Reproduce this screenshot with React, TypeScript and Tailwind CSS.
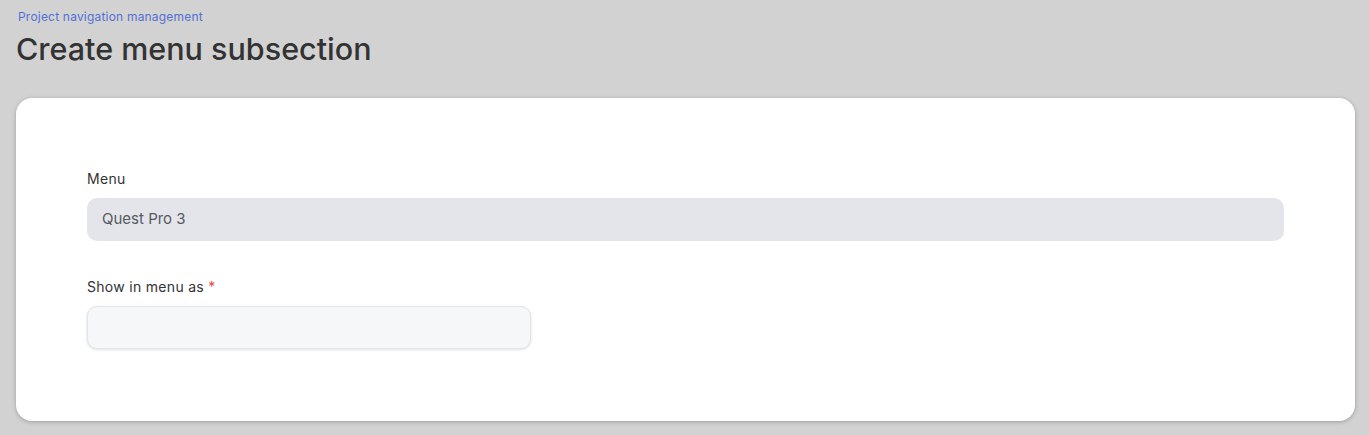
import React from 'react';

const App = () => {
  return (
    <div
      className="min-h-[435px] bg-[#d2d2d2] pl-4 pr-[14px] pt-[9px] pb-[14px]"
      style={{ fontFamily: 'Inter, "Noto Sans", sans-serif' }}
    >
      {/* Header */}
      <div className="pl-[2px] text-[12px] leading-4 tracking-[0.2px] text-[#5470d6]">Project navigation management</div>
      <h1 className="mt-[4px] text-[30.5px] font-medium leading-[40px] text-[#333333]">
        Create menu subsection
      </h1>

      {/* Card */}
      <div className="mt-[29px] rounded-[16px] bg-white px-[71px] pt-[71px] pb-[72px] shadow-[0_1px_4px_rgba(0,0,0,0.25)]">
        <div className="flex flex-col">
          <label className="text-[14px] leading-5 tracking-[0.3px] text-[#333]">Menu</label>
          <div className="mt-[9px] flex h-[43px] items-center rounded-[10px] bg-[#e4e5ea] px-[15px] text-[15px] text-[#555a62]">
            Quest Pro 3
          </div>

          <label className="mt-[36px] text-[14px] leading-5 tracking-[0.3px] text-[#333]">
            Show in menu as <span className="text-[#e5484d]">*</span>
          </label>
          <input
            type="text"
            className="mt-[9px] h-[43px] w-[444px] rounded-[10px] border border-[#e3e4ea] bg-[#f6f7f9] px-[15px] text-[15px] shadow-[0_1px_3px_rgba(0,0,0,0.12)] outline-none"
          />
        </div>
      </div>
    </div>
  );
};

export default App;
